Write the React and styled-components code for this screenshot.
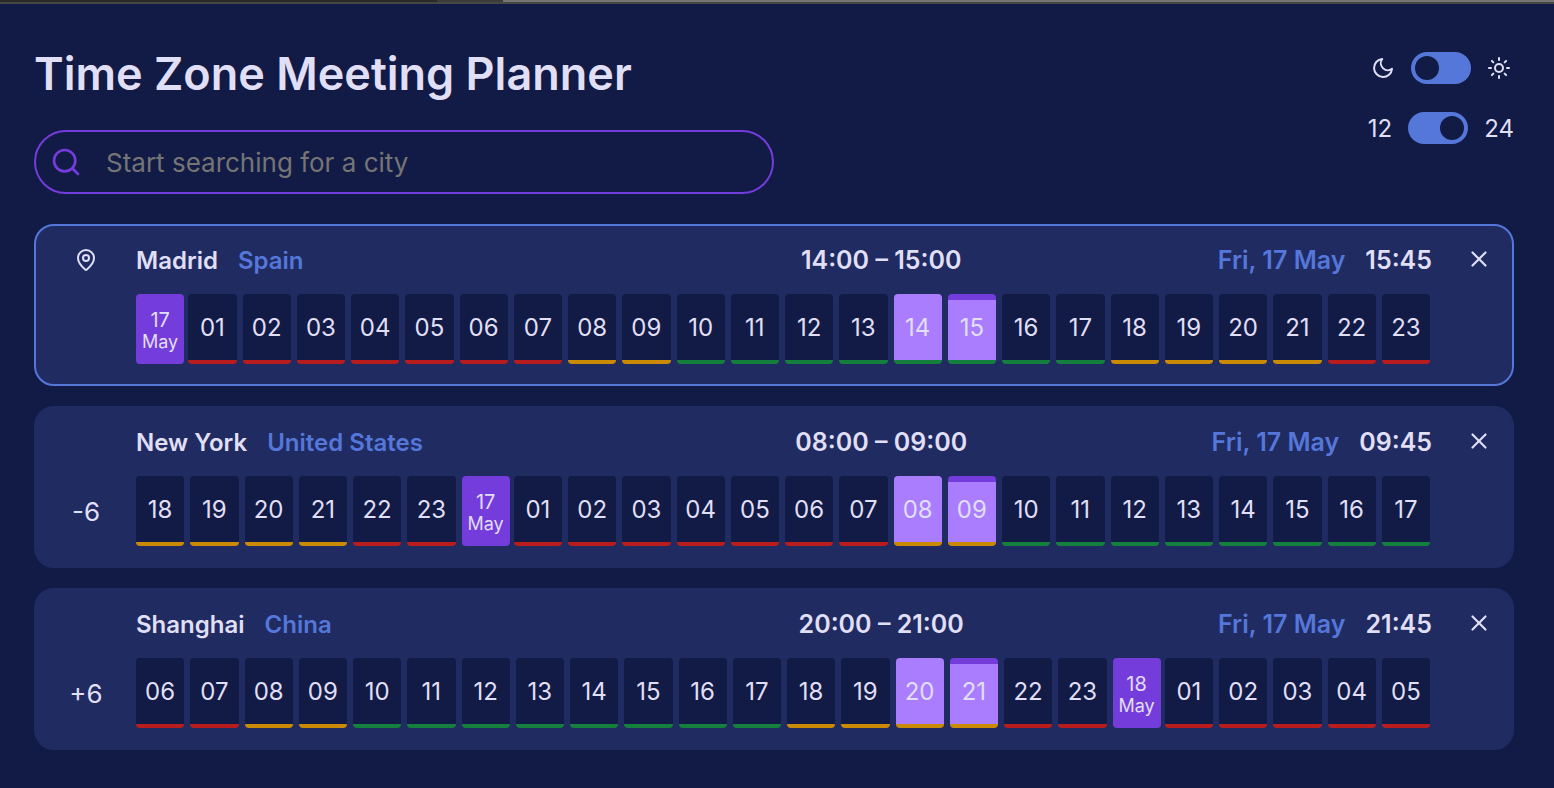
import React, { useState } from "react";
import styled, { createGlobalStyle } from "styled-components";
import { MapPin, Search, Sun, X } from "lucide-react";

const NIGHT = "#b91c1c";
const EDGE = "#ca8a04";
const WORK = "#15803d";

const zones = [
  {
    city: "Madrid",
    country: "Spain",
    range: "14:00 – 15:00",
    date: "Fri, 17 May",
    time: "15:45",
    offset: null,
    start: 0,
    day: "17",
  },
  {
    city: "New York",
    country: "United States",
    range: "08:00 – 09:00",
    date: "Fri, 17 May",
    time: "09:45",
    offset: "-6",
    start: 18,
    day: "17",
  },
  {
    city: "Shanghai",
    country: "China",
    range: "20:00 – 21:00",
    date: "Fri, 17 May",
    time: "21:45",
    offset: "+6",
    start: 6,
    day: "18",
  },
];

const slots = Array.from({ length: 24 }, (_, i) => i);
const SELECTED = 14;
const CURRENT = 15;

const hourColor = (hour) => {
  if (hour < 8 || hour > 21) return NIGHT;
  if (hour < 10 || hour > 17) return EDGE;
  return WORK;
};

const MoonIcon = () => (
  <svg
    width="24"
    height="24"
    viewBox="0 0 24 24"
    fill="none"
    stroke="currentColor"
    strokeWidth="2"
    strokeLinecap="round"
    strokeLinejoin="round"
  >
    <path d="M21 12.79A9 9 0 1 1 11.21 3 7 7 0 0 0 21 12.79z" />
  </svg>
);

const Zone = ({ zone }) => (
  <Card $home={!zone.offset}>
    <Marker>{!zone.offset && <MapPin size={24} />}</Marker>
    <Head>
      <Place>
        <h2>{zone.city}</h2>
        <Accent>{zone.country}</Accent>
      </Place>
      <Range>{zone.range}</Range>
      <Now>
        <Accent>{zone.date}</Accent>
        <time>{zone.time}</time>
      </Now>
    </Head>
    <Remove type="button" aria-label={`Remove ${zone.city}`}>
      <X size={26} strokeWidth={2} />
    </Remove>
    <Offset>{zone.offset}</Offset>
    <Hours>
      {slots.map((slot) => {
        const hour = (zone.start + slot) % 24;
        if (hour === 0) {
          return (
            <Midnight type="button" key={slot}>
              <span>{zone.day}</span>
              <small>May</small>
            </Midnight>
          );
        }
        return (
          <Hour
            type="button"
            key={slot}
            $line={hourColor(hour)}
            $active={slot === SELECTED || slot === CURRENT}
            $current={slot === CURRENT}
          >
            {String(hour).padStart(2, "0")}
          </Hour>
        );
      })}
    </Hours>
  </Card>
);

const App = () => {
  const [light, setLight] = useState(false);
  const [full, setFull] = useState(true);

  return (
    <>
      <GlobalStyle />
      <WindowEdge>
        <EdgeTab $grow={437} $color="#292929" />
        <EdgeTab $grow={66} $color="#3c3c3c" />
        <EdgeTab $grow={1051} $color="#747474" />
      </WindowEdge>
      <Page>
        <Header>
          <Intro>
            <Title>Time Zone Meeting Planner</Title>
            <SearchBox>
              <Search size={32} strokeWidth={2} />
              <input
                type="text"
                aria-label="City"
                placeholder="Start searching for a city"
              />
            </SearchBox>
          </Intro>
          <Settings>
            <Setting>
              <MoonIcon />
              <Switch
                type="checkbox"
                role="switch"
                aria-label="Light theme"
                checked={light}
                onChange={() => setLight(!light)}
              />
              <Sun size={24} />
            </Setting>
            <Setting>
              <span>12</span>
              <Switch
                type="checkbox"
                role="switch"
                aria-label="24 hour clock"
                checked={full}
                onChange={() => setFull(!full)}
              />
              <span>24</span>
            </Setting>
          </Settings>
        </Header>
        <Zones>
          {zones.map((zone) => (
            <Zone key={zone.city} zone={zone} />
          ))}
        </Zones>
      </Page>
    </>
  );
};

export default App;

const GlobalStyle = createGlobalStyle`
  * {
    box-sizing: border-box;
  }
  body {
    margin: 0;
    background-color: #111b45;
    color: #e0dff5;
    font-family: Inter, Roboto, sans-serif;
    font-size: 24px;
  }
  button,
  input {
    font: inherit;
    color: inherit;
  }
`;

const WindowEdge = styled.div`
  display: flex;
  height: 4px;
  background-color: #3c3c3c;
  border-bottom: 2px solid #474744;
`;

const EdgeTab = styled.div`
  flex: ${({ $grow }) => $grow} 1 0;
  background-color: ${({ $color }) => $color};
`;

const Page = styled.main`
  padding: 40px 40px 34px 34px;
`;

const Header = styled.header`
  display: flex;
  justify-content: space-between;
  align-items: flex-start;
`;

const Intro = styled.div`
  flex: 0 1 740px;
`;

const Title = styled.h1`
  margin: 0 0 26px;
  font-size: 45px;
  line-height: 60px;
  font-weight: 600;
  white-space: nowrap;
`;

const SearchBox = styled.label`
  display: flex;
  align-items: center;
  gap: 24px;
  height: 64px;
  padding: 0 16px 0 14px;
  border: 2px solid #753cdc;
  border-radius: 32px;
  color: #753cdc;

  input {
    flex: 1;
    min-width: 0;
    padding: 0;
    border: 0;
    outline: 0;
    background: none;
    font-size: 26px;
    color: #e0dff5;
  }
  input::placeholder {
    color: #757575;
    opacity: 1;
  }
`;

const Settings = styled.div`
  display: flex;
  flex-direction: column;
  align-items: center;
  gap: 28px;
  padding-top: 8px;
`;

const Setting = styled.div`
  display: flex;
  align-items: center;
  gap: 16px;
  height: 32px;
`;

const Switch = styled.input`
  appearance: none;
  display: flex;
  align-items: center;
  width: 60px;
  height: 32px;
  margin: 0;
  padding: 0 4px;
  border-radius: 16px;
  background-color: #5577d9;
  cursor: pointer;

  &::before {
    content: "";
    width: 24px;
    height: 24px;
    border-radius: 50%;
    background-color: #111b45;
  }
  &:checked {
    justify-content: flex-end;
  }
`;

const Zones = styled.section`
  display: grid;
  gap: 20px;
  margin-top: 30px;
`;

const Card = styled.article`
  display: grid;
  grid-template-columns: 100px 1fr 80px;
  grid-template-rows: 36px 70px;
  row-gap: 16px;
  padding: 16px 0 20px;
  border: 2px solid ${({ $home }) => ($home ? "#5577d9" : "#1f2b61")};
  border-radius: 20px;
  background-color: #1f2b61;
`;

const Marker = styled.div`
  display: flex;
  align-items: center;
  justify-content: center;
`;

const Offset = styled(Marker)`
  font-size: 26px;
`;

const Head = styled.div`
  display: grid;
  grid-template-columns: 9fr 5fr 6fr;
  align-items: center;
  font-weight: 600;
  white-space: nowrap;
`;

const Place = styled.div`
  display: flex;
  gap: 20px;

  h2 {
    margin: 0;
    font-size: 24px;
    font-weight: 600;
  }
`;

const Accent = styled.span`
  color: #5577d9;
`;

const Range = styled.div`
  font-size: 25px;
  text-align: center;
`;

const Now = styled.div`
  display: flex;
  justify-content: flex-end;
  gap: 20px;
  font-size: 25px;
`;

const Remove = styled.button`
  display: flex;
  align-items: center;
  justify-content: center;
  padding: 0 0 2px 14px;
  border: 0;
  background: none;
  cursor: pointer;
`;

const Hours = styled.div`
  display: flex;
  gap: 6px;
  padding-right: 2px;
`;

const Hour = styled.button`
  flex: 1 1 0;
  min-width: 0;
  padding: 0 0 4px;
  border: 0;
  border-radius: 4px;
  background-color: ${({ $active }) => ($active ? "#aa7dff" : "#111b45")};
  background-image: linear-gradient(
    to bottom,
    ${({ $current }) => ($current ? "#753cdc" : "transparent")} 6px,
    transparent 6px calc(100% - 4px),
    ${({ $line }) => $line} calc(100% - 4px)
  );
  cursor: pointer;
`;

const Midnight = styled(Hour)`
  display: flex;
  flex-direction: column;
  align-items: center;
  justify-content: center;
  margin-right: -2px;
  padding: 4px 0 0;
  background: #753cdc;
  font-size: 20px;
  line-height: 22px;

  small {
    font-size: 18px;
  }
`;
